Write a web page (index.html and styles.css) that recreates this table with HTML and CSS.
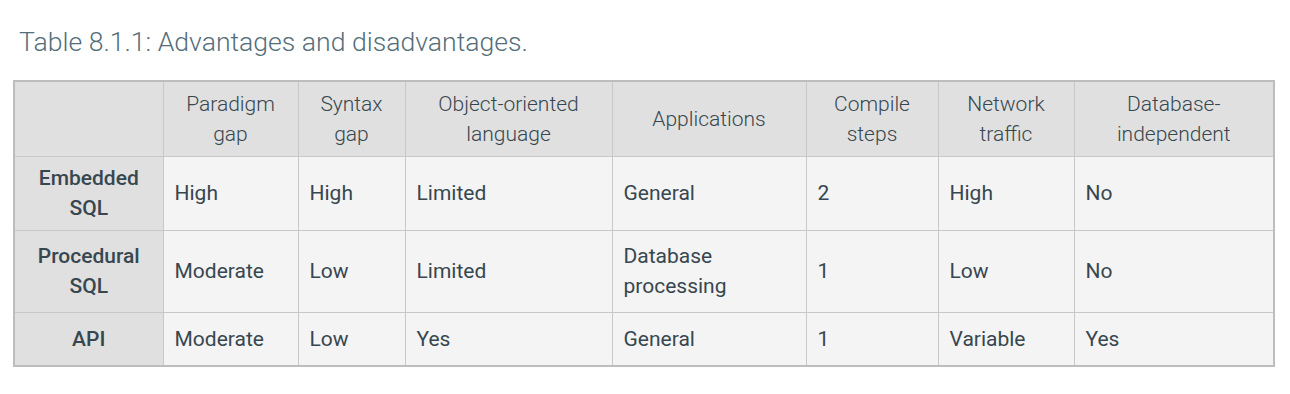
FILE: index.html
```html
<!DOCTYPE html>
<html lang="en">
<head>
    <meta charset="UTF-8">
    <title>Table 8.1.1</title>
    <link rel="stylesheet" href="styles.css">
</head>
<body>
    <div class="caption">Table 8.1.1: Advantages and disadvantages.</div>
    <table class="compare">
        <colgroup>
            <col class="c1"><col class="c2"><col class="c3"><col class="c4">
            <col class="c5"><col class="c6"><col class="c7"><col class="c8">
        </colgroup>
        <tr class="head-row">
            <th></th>
            <th>Paradigm<br>gap</th>
            <th>Syntax<br>gap</th>
            <th>Object-oriented<br>language</th>
            <th>Applications</th>
            <th>Compile<br>steps</th>
            <th>Network<br>traffic</th>
            <th>Database-<br>independent</th>
        </tr>
        <tr class="row-a">
            <th class="row-head">Embedded<br>SQL</th>
            <td>High</td>
            <td>High</td>
            <td>Limited</td>
            <td>General</td>
            <td>2</td>
            <td>High</td>
            <td>No</td>
        </tr>
        <tr class="row-b">
            <th class="row-head">Procedural<br>SQL</th>
            <td>Moderate</td>
            <td>Low</td>
            <td>Limited</td>
            <td>Database<br>processing</td>
            <td>1</td>
            <td>Low</td>
            <td>No</td>
        </tr>
        <tr class="row-c">
            <th class="row-head">API</th>
            <td>Moderate</td>
            <td>Low</td>
            <td>Yes</td>
            <td>General</td>
            <td>1</td>
            <td>Variable</td>
            <td>Yes</td>
        </tr>
    </table>
</body>
</html>
```

FILE: styles.css
```css
body {
    margin: 0;
    padding: 0 13px;
    font-family: Roboto, 'Liberation Sans', sans-serif;
    color: #37474f;
    background: white;
}
.caption {
    padding: 25px 0 0 6px;
    height: 55px;
    font-size: 26.6px;
    font-weight: 300;
    color: #546e7a;
    line-height: 34px;
}
.compare {
    table-layout: fixed;
    width: 1260px;
    border-collapse: collapse;
    border: 2px solid #bdbdbd;
    font-size: 21px;
    line-height: 30px;
}
.c1 { width: 149px; }
.c2 { width: 135px; }
.c3 { width: 107px; }
.c4 { width: 207px; }
.c5 { width: 194px; }
.c6 { width: 132px; }
.c7 { width: 136px; }
.c8 { width: 200px; }
.compare th,
.compare td {
    border: 1px solid #c8c8c8;
    padding: 0 11px;
    vertical-align: middle;
}
.compare th {
    background: #e0e0e0;
    font-weight: 300;
    text-align: center;
}
.compare td {
    background: #f4f4f4;
    text-align: left;
}
.compare .row-head {
    font-weight: 500;
}
.head-row { height: 75px; }
.row-a { height: 74px; }
.row-b { height: 82px; }
.row-c { height: 54px; }
```
